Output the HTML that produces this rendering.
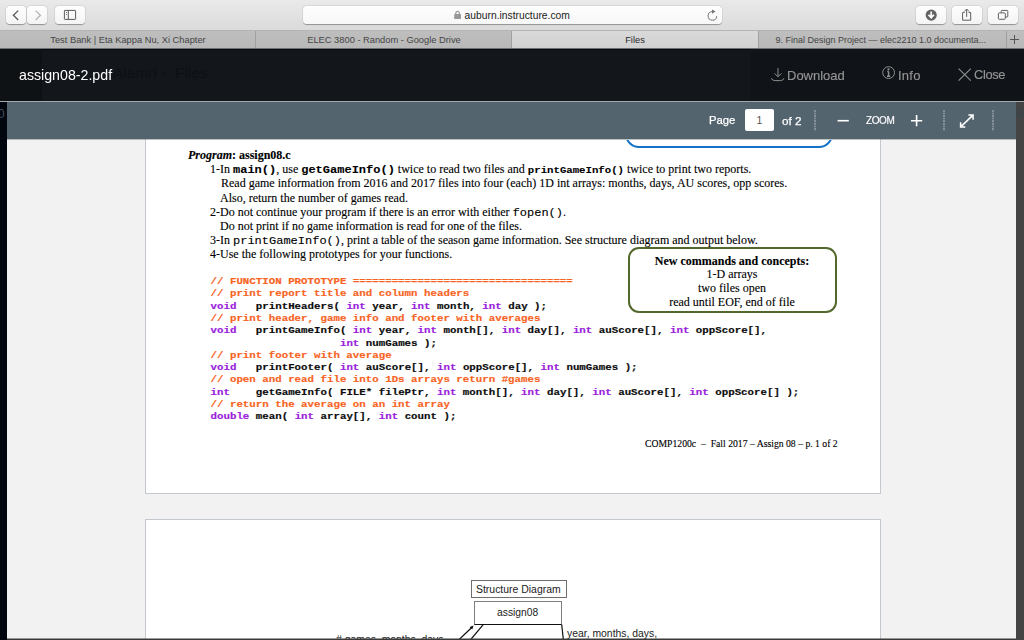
<!DOCTYPE html>
<html><head><meta charset="utf-8">
<style>
*{box-sizing:border-box;margin:0;padding:0}
html,body{width:1024px;height:640px;overflow:hidden;background:#f2f2f2;font-family:"Liberation Sans",sans-serif}
.abs{position:absolute}
.t{position:absolute;white-space:nowrap;line-height:1}
.g{will-change:transform}
#chrome{left:0;top:0;width:1024px;height:30px;background:linear-gradient(#eaeaea,#dbdbdb)}
.btn{position:absolute;top:6px;height:18px;border-radius:4px;background:linear-gradient(#fefefe,#f4f4f4);box-shadow:0 0.5px 1px rgba(0,0,0,.32),0 0 0 0.5px rgba(0,0,0,.07)}
#url{left:303px;top:6px;width:419px;height:18px;border-radius:4px;background:linear-gradient(#fefefe,#f7f7f7);box-shadow:0 0.5px 1px rgba(0,0,0,.32),0 0 0 0.5px rgba(0,0,0,.07)}
#tabs{left:0;top:30px;width:1024px;height:19px;background:linear-gradient(#bebebe,#b8b8b8);border-top:1px solid #b4b4b4;border-bottom:1px solid #6f7173}
.tab{position:absolute;top:0;height:17px;font-size:9.3px;color:#454545;text-align:center;line-height:18px;white-space:nowrap}
.tab.act{background:linear-gradient(#d9d9d9,#d1d1d1);color:#2a2a2a}
.div{position:absolute;top:0;width:1px;height:17px;background:#a0a0a0}
#dark{left:0;top:49px;width:1024px;height:52px;background:#13171b;border-top:1px solid #05090d}
#slate{left:0;top:101px;width:1024px;height:38px;background:#54646f;border-top:1px solid #a9acae}
#lstrip{left:0;top:101px;width:7px;height:539px;background:#02060f}
#rstrip{left:1016px;top:101px;width:8px;height:539px;background:#444444}
.page{position:absolute;left:145px;width:736px;background:#fff;border:1px solid #c3c9cf}
.doc{font-family:"Liberation Serif",serif;font-size:12px;color:#000;-webkit-text-stroke:.12px #000;white-space:pre;position:absolute;line-height:14px}
.m{font-family:"Liberation Mono",monospace;font-weight:bold;font-size:12px;display:inline-block;transform:scaleY(.87);transform-origin:0 76%;line-height:14px;vertical-align:baseline}
.mr{font-family:"Liberation Mono",monospace;font-size:12px;display:inline-block;transform:scaleY(.87);transform-origin:0 76%;line-height:14px;vertical-align:baseline}
.code{font-family:"Liberation Mono",monospace;font-weight:bold;font-size:10.79px;white-space:pre;position:absolute;left:210.5px;line-height:12px;color:#0c0c0c;-webkit-text-stroke-width:.2px;transform:translateY(.6px) scaleY(.87);transform-origin:0 8.9px}
.c{color:#f8641f}.k{color:#9a20dc}
.sep{position:absolute;top:110px;height:21px;width:2px;background:repeating-linear-gradient(rgba(255,255,255,.28) 0 1.6px,rgba(255,255,255,.08) 1.6px 2.6px)}
</style></head><body>
<!-- browser chrome -->
<div id="chrome" class="abs"></div>
<div class="btn" style="left:6px;width:20px"></div>
<div class="btn" style="left:27px;width:20px"></div>
<div class="btn" style="left:55px;width:30px"></div>
<div id="url" class="abs"></div>
<div class="t" style="left:464.6px;top:11px;font-size:10.3px;color:#1b1b1b">auburn.instructure.com</div>
<div class="btn" style="left:916px;width:30px"></div>
<div class="btn" style="left:952px;width:30px"></div>
<div class="btn" style="left:988px;width:30px"></div>
<div id="tabs" class="abs">
 <div class="tab" style="left:0;width:256px">Test Bank | Eta Kappa Nu, Xi Chapter</div>
 <div class="tab" style="left:256px;width:256px">ELEC 3800 - Random - Google Drive</div>
 <div class="tab act" style="left:512px;width:246px">Files</div>
 <div class="tab" style="left:759px;width:247px;text-align:left;padding-left:16.5px;font-size:9px">9. Final Design Project — elec2210 1.0 documenta...</div>
 <div class="div" style="left:255px"></div><div class="div" style="left:511px"></div><div class="div" style="left:758px"></div><div class="div" style="left:1006px"></div>
</div>
<!-- dark header -->
<div id="dark" class="abs"></div>
<div class="abs" style="left:0;top:49px;width:42px;height:52px;background:#0f1215"></div>
<div class="abs" style="left:751px;top:49px;width:273px;height:52px;background:#101418"></div>
<div class="t" style="left:113px;top:65px;font-size:15.5px;color:#0d1013">Alamri ›&nbsp; Files</div>
<div class="t g" style="left:19px;top:68px;font-size:14.2px;color:#fff">assign08-2.pdf</div>
<div class="t g" style="left:786.6px;top:69px;font-size:13px;color:#949494;-webkit-text-stroke:.15px #949494">Download</div>
<div class="t g" style="left:897.6px;top:69px;font-size:13px;letter-spacing:.25px;color:#949494;-webkit-text-stroke:.15px #949494">Info</div>
<div class="t g" style="left:974px;top:69px;font-size:12.8px;letter-spacing:-.35px;color:#949494;-webkit-text-stroke:.15px #949494">Close</div>
<!-- slate toolbar -->
<div id="slate" class="abs"></div>
<div class="t g" style="left:708.6px;top:115px;font-size:11.3px;color:#fff;-webkit-text-stroke:.25px #fff">Page</div>
<div class="abs" style="left:745px;top:109px;width:29px;height:22px;background:#fff;border-radius:2px;font-size:10.5px;color:#555;text-align:center;line-height:23px">1</div>
<div class="t g" style="left:782.3px;top:115px;font-size:11.7px;color:#fff;-webkit-text-stroke:.25px #fff">of 2</div>
<div class="t g" style="left:865.5px;top:116px;font-size:10px;letter-spacing:-.4px;color:#fff;-webkit-text-stroke:.15px #fff">ZOOM</div>
<div class="sep" style="left:814px"></div><div class="sep" style="left:943px"></div><div class="sep" style="left:992px"></div>
<!-- pages -->
<div class="page" style="top:139px;height:355px;border-top:0"></div>
<div class="page" style="top:519px;height:130px"></div>
<div class="abs" style="left:0;top:139px;width:1024px;height:1px;background:rgba(84,100,111,.4)"></div>
<div id="lstrip" class="abs"></div>
<div class="t" style="left:-2.5px;top:106.5px;font-size:13px;color:#3a4b56;width:9.5px;overflow:hidden">0</div>
<div id="rstrip" class="abs"></div>
<div class="t" style="left:1016.5px;top:106.5px;font-size:13px;color:#33444f">0</div>
<div class="abs" style="left:0;top:101px;width:1024px;height:1px;background:#a4a8ab"></div>
<!-- boxes -->
<div class="abs" style="left:625px;top:100px;width:208px;height:48px;border:2px solid #1273c6;border-radius:14px;clip-path:inset(40px 0 0 0)"></div>
<div class="abs" style="left:627.5px;top:247px;width:209px;height:66px;border:2px solid #53682d;border-radius:11px"></div>
<div class="doc" style="left:627px;width:210px;top:254px;text-align:center;line-height:13.9px"><b style="position:relative;top:.8px">New commands and concepts:</b>
1-D arrays
two files open
read until EOF, end of file</div>
<div class="doc" style="left:645px;top:437.3px;font-size:9.7px">COMP1200c  –  Fall 2017 – Assign 08 – p. 1 of 2</div>
<!-- doc text -->
<div class="doc" style="left:188px;top:148px"><b><i>Program</i>: assign08.c</b></div>
<div class="doc" style="left:210px;top:162px">1-In <span class="m">main()</span>, use <span class="m">getGameInfo()</span> twice to read two files and <span class="m" style="font-size:10.7px">printGameInfo()</span> twice to print two reports.</div>
<div class="doc" style="left:221px;top:176px">Read game information from 2016 and 2017 files into four (each) 1D int arrays: months, days, AU scores, opp scores.</div>
<div class="doc" style="left:220px;top:191px">Also, return the number of games read.</div>
<div class="doc" style="left:210px;top:205px">2-Do not continue your program if there is an error with either <span class="mr">fopen()</span>.</div>
<div class="doc" style="left:220px;top:219px">Do not print if no game information is read for one of the files.</div>
<div class="doc" style="left:210px;top:233px">3-In <span class="mr">printGameInfo()</span>, print a table of the season game information. See structure diagram and output below.</div>
<div class="doc" style="left:210px;top:247px">4-Use the following prototypes for your functions.</div>
<!-- code -->
<div class="code c" style="top:274px">// FUNCTION PROTOTYPE ==================================</div>
<div class="code c" style="top:286px">// print report title and column headers</div>
<div class="code" style="top:299px"><span class="k">void</span>   printHeaders( <span class="k">int</span> year, <span class="k">int</span> month, <span class="k">int</span> day );</div>
<div class="code c" style="top:311px">// print header, game info and footer with averages</div>
<div class="code" style="top:323px"><span class="k">void</span>   printGameInfo( <span class="k">int</span> year, <span class="k">int</span> month[], <span class="k">int</span> day[], <span class="k">int</span> auScore[], <span class="k">int</span> oppScore[],</div>
<div class="code" style="top:336px">                    <span class="k">int</span> numGames );</div>
<div class="code c" style="top:348px">// print footer with average</div>
<div class="code" style="top:360px"><span class="k">void</span>   printFooter( <span class="k">int</span> auScore[], <span class="k">int</span> oppScore[], <span class="k">int</span> numGames );</div>
<div class="code c" style="top:372px">// open and read file into 1Ds arrays return #games</div>
<div class="code" style="top:385px"><span class="k">int</span>    getGameInfo( FILE* filePtr, <span class="k">int</span> month[], <span class="k">int</span> day[], <span class="k">int</span> auScore[], <span class="k">int</span> oppScore[] );</div>
<div class="code c" style="top:397px">// return the average on an int array</div>
<div class="code" style="top:409px"><span class="k">double</span> mean( <span class="k">int</span> array[], <span class="k">int</span> count );</div>
<!-- structure diagram -->
<div class="abs" style="left:471px;top:579.5px;width:95.5px;height:18.5px;border:1px solid #6e6e6e;background:#fff"></div>
<div class="t" style="left:476px;top:585px;font-size:10.45px;color:#222">Structure Diagram</div>
<div class="abs" style="left:474px;top:601px;width:88px;height:24px;border:1px solid #7d7d7d;border-bottom:1.3px solid #111;background:#fff"></div>
<div class="t" style="left:497px;top:608px;font-size:10.3px;color:#222">assign08</div>
<div class="t" style="left:567px;top:628.5px;font-size:10.4px;color:#222">year, months, days,</div>
<div class="t" style="left:336px;top:635.3px;font-size:10.4px;color:#222"># games, months, days</div>
<!-- ICONS overlay -->
<svg class="abs" style="left:0;top:0" width="1024" height="640" viewBox="0 0 1024 640" fill="none">
 <!-- back / forward -->
 <path d="M18.2 10.6 L13.4 15.3 L18.2 20" stroke="#585858" stroke-width="1.3"/>
 <path d="M35.6 10.6 L40.4 15.3 L35.6 20" stroke="#b4b4b4" stroke-width="1.3"/>
 <!-- sidebar -->
 <rect x="64.4" y="10.4" width="11.2" height="9" rx="0.6" stroke="#5a5a5a" stroke-width="1"/>
 <path d="M68.3 10.4 V19.4" stroke="#5a5a5a" stroke-width="1"/>
 <path d="M66 12.5h1 M66 14.5h1" stroke="#5a5a5a" stroke-width=".8"/>
 <!-- lock -->
 <rect x="454.2" y="13.9" width="6.8" height="5" rx=".6" fill="#979797"/>
 <path d="M455.8 14.2 V13.3 a1.8 1.9 0 0 1 3.6 0 V14.2" stroke="#979797" stroke-width="1.2"/>
 <!-- reload -->
 <path d="M716.7 16.2 A4.3 4.3 0 1 1 712.4 11.6" stroke="#747474" stroke-width="1"/>
 <path d="M712 9.4 L715.5 11.6 L712 13.8 Z" fill="#747474" stroke="none"/>
 <!-- download circle -->
 <circle cx="931.2" cy="15.1" r="5.6" fill="#636363"/>
 <path d="M931.2 11.6 V16.6 M928.5 14.8 L931.2 17.8 L933.9 14.8" stroke="#fff" stroke-width="1.7" stroke-linejoin="miter"/>
 <!-- share -->
 <path d="M964.8 12.4 H962.6 V20.2 H970.7 V12.4 H968.5" stroke="#5f5f5f" stroke-width="1"/>
 <path d="M966.65 16.8 V9.2 M964.3 11.4 L966.65 9 L969 11.4" stroke="#5f5f5f" stroke-width="1"/>
 <!-- tabs icon -->
 <path d="M1001.2 12.6 V11.2 a.8 .8 0 0 1 .8 -.8 H1007 a.8 .8 0 0 1 .8 .8 V16.2 a.8 .8 0 0 1 -.8 .8 H1005.6" stroke="#5f5f5f" stroke-width="1"/>
 <rect x="998.4" y="12.9" width="6.9" height="6.4" rx=".8" stroke="#5f5f5f" stroke-width="1"/>
 <!-- plus tab -->
 <path d="M1010 39.5 H1019 M1014.5 35 V44" stroke="#555" stroke-width="1"/>
 <!-- header: download -->
 <path d="M778 68 V76.6 M774.6 73.4 L778 76.8 L781.4 73.4" stroke="#8e8e8e" stroke-width="1"/>
 <path d="M771.4 78.2 Q772.2 80.6 774.8 80.6 H780.6 Q783.2 80.6 784 78.2" stroke="#8e8e8e" stroke-width="1"/>
 <!-- header: info -->
 <circle cx="888.6" cy="72.6" r="5.9" stroke="#8e8e8e" stroke-width="1"/>
 <path d="M888.6 71.4 V76.2 M887 76.3 H890.2 M887.2 71.5 H888.6" stroke="#8e8e8e" stroke-width="1.5"/>
 <circle cx="888.5" cy="69.4" r="1.05" fill="#8e8e8e"/>
 <!-- header: close -->
 <path d="M958.6 68.6 L970.8 80.6 M970.8 68.6 L958.6 80.6" stroke="#8e8e8e" stroke-width="1.15"/>
 <!-- minus / plus -->
 <path d="M837.6 120.7 H848.8" stroke="#fff" stroke-width="1.6"/>
 <path d="M911 120.7 H922.2 M916.6 115.1 V126.3" stroke="#fff" stroke-width="1.6"/>
 <!-- expand -->
 <path d="M961.6 126 L972.2 115.9" stroke="#fff" stroke-width="1.7"/>
 <path d="M968.4 115 H973.1 V119.7" stroke="#fff" stroke-width="1.5" stroke-linejoin="miter"/>
 <path d="M970 115.6 H972.5 V118.1 Z" fill="#fff" fill-opacity=".7"/>
 <path d="M960.6 122.3 V127 H965.3" stroke="#fff" stroke-width="1.5" stroke-linejoin="miter"/>
 <path d="M961.2 123.9 V126.4 H963.7 Z" fill="#fff" fill-opacity=".7"/>
 <!-- diagram lines -->
 <path d="M458.6 640 L472 627.2" stroke="#111" stroke-width="1.2"/>
 <path d="M473.6 625.6 L469.6 627 L472.2 629.6 Z" fill="#111"/>
 <path d="M470.4 640 L483.2 624.6" stroke="#111" stroke-width="1.2"/>
 <path d="M561.7 624.5 L563.4 640" stroke="#111" stroke-width="1.2"/>
 <!-- bottom line -->
 <path d="M7 639.2 H1016" stroke="#3a3a3a" stroke-width="1.6"/>
</svg>
</body></html>
